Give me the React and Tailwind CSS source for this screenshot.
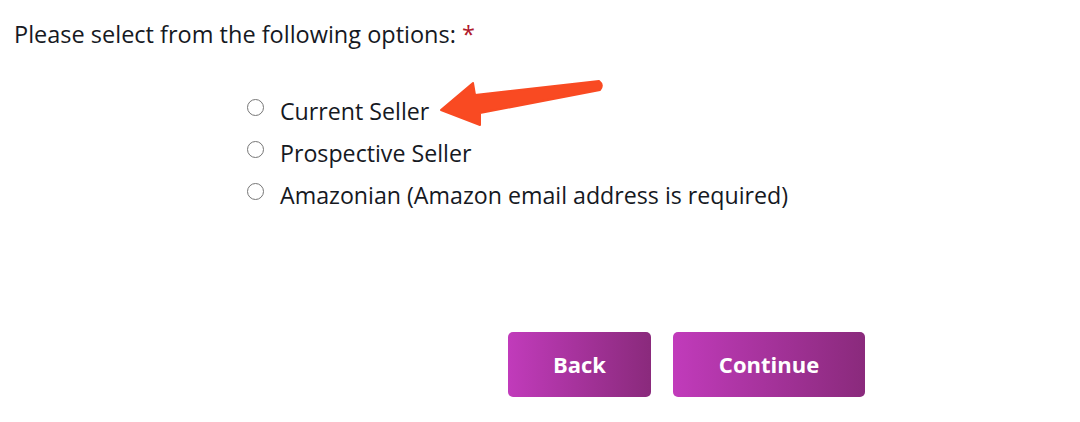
import { useState } from "react";

const options = [
  { id: "current", label: "Current Seller" },
  { id: "prospective", label: "Prospective Seller" },
  { id: "amazonian", label: "Amazonian (Amazon email address is required)" },
];

// red annotation arrow pointing at the first option
const Arrow = () => (
  <svg
    className="absolute left-[436px] top-[76px]"
    width="172"
    height="56"
    viewBox="436 76 172 56"
  >
    <path
      d="M441 110 L473 83 L475 95 L599 81 Q604 85 600 90 L480 113 L480 125 Z"
      fill="#f94a22"
      stroke="#f94a22"
      strokeWidth="2"
      strokeLinejoin="round"
    />
  </svg>
);

export default function App() {
  const [picked, setPicked] = useState("");

  return (
    <div className="relative w-[1080px] h-[422px] bg-white font-['Open_Sans',sans-serif] text-[#16191f]">
      {/* Question */}
      <div className="pl-[14px] pt-[18px] text-[23.5px] leading-[32px]">
        Please select from the following options: <span className="text-[#b0192b]">*</span>
      </div>

      {/* Radio list */}
      <div className="ml-[247px] mt-[45px] flex flex-col gap-[10px]">
        {options.map((o) => (
          <label key={o.id} className="flex items-center gap-[16px] text-[23.2px] leading-[32px] cursor-pointer">
            <input
              type="radio"
              name="seller"
              checked={picked === o.id}
              onChange={() => setPicked(o.id)}
              className="appearance-none w-[17px] h-[17px] rounded-full border-[1.5px] border-[#767676] bg-white -mt-[8px]"
            />
            <span>{o.label}</span>
          </label>
        ))}
      </div>

      {/* Actions */}
      <div className="ml-[508px] mt-[121px] flex gap-[22px]">
        <button className="w-[143px] h-[65px] rounded-[5px] bg-gradient-to-r from-[#c13bbb] to-[#8a2a7c] text-white text-[22px] font-bold">
          Back
        </button>
        <button className="w-[192px] h-[65px] rounded-[5px] bg-gradient-to-r from-[#c13bbb] to-[#8a2a7c] text-white text-[22px] font-bold">
          Continue
        </button>
      </div>

      <Arrow />
    </div>
  );
}
